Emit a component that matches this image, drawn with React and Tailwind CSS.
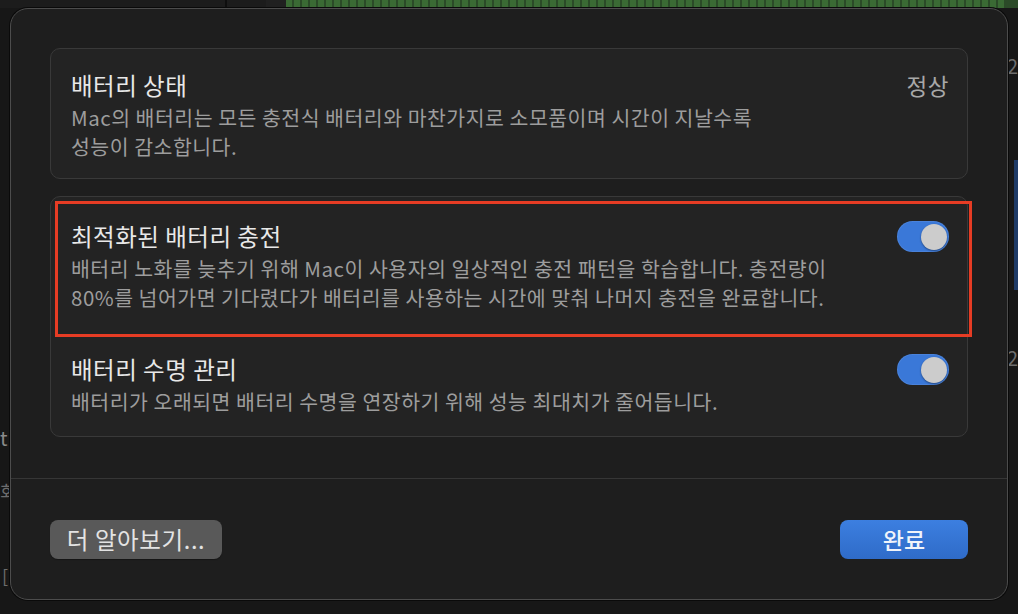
import React from 'react';

const font = { fontFamily: '"Noto Sans CJK KR", "Noto Sans", sans-serif' };

const Toggle = () => (
  <div className="w-[52px] h-[31px] rounded-full bg-[#3a78d8] flex items-center justify-end px-[2px] shrink-0 shadow-[inset_0_0_0_1px_rgba(255,255,255,0.08)]">
    <div className="w-[26px] h-[26px] rounded-full bg-[#cccccc] shadow-[0_1px_2px_rgba(0,0,0,0.4)]" />
  </div>
);

const Row = ({ title, desc, right, className = '' }) => (
  <div className={`flex items-start justify-between pl-5 pr-[18px] ${className}`}>
    <div className="flex flex-col">
      <div className="text-[23.5px] leading-[30px] tracking-[0.5px] text-[#e8e8e8]">{title}</div>
      <div className="text-[20.5px] leading-[29px] tracking-[0.5px] text-[#9d9d9d] mt-[3px]">{desc}</div>
    </div>
    {right}
  </div>
);

export default function App() {
  return (
    <div style={font} className="w-[1018px] h-[614px] bg-[#171717] relative overflow-hidden">
      {/* background strip behind the sheet */}
      <div className="absolute top-0 left-0 right-0 h-[8px] flex">
        <div className="w-[225px] bg-[#1c1c1c]" />
        <div className="w-[2px] bg-[#0e0e0e]" />
        <div className="w-[39px] bg-[#1c1c1c]" />
        <div className="w-[20px] bg-[#202020]" />
        <div className="flex-1 flex gap-[2px] bg-[#2b4a28]">
          {Array.from({ length: 90 }).map((_, i) => (
            <div key={i} className="w-[6px] bg-[#3a6a34]" />
          ))}
        </div>
      </div>
      <div className="absolute left-0 top-[428px] text-[20px] text-[#8a8a8a] leading-none">t</div>
      <div className="absolute left-0 top-[482px] text-[18px] text-[#6d6d6d] leading-none">회</div>
      <div className="absolute left-[2px] top-[566px] text-[18px] text-[#6d6d6d] leading-none">[</div>
      <div className="absolute right-0 top-[56px] text-[20px] text-[#6d6d6d] leading-none">2</div>
      <div className="absolute right-0 top-[348px] text-[20px] text-[#6d6d6d] leading-none">2</div>
      <div className="absolute right-0 top-[160px] w-[4px] h-[130px] bg-[#1e3a66]" />

      {/* sheet */}
      <div className="absolute left-[10px] top-[8px] w-[998px] h-[592px] rounded-[18px] bg-[#1e1e1e] border border-[#4c4c4c] flex flex-col shadow-[0_0_0_1px_#0a0a0a]">
        <div className="px-[39px] pt-[39px] flex flex-col gap-[17px]">
          <div className="rounded-[10px] border border-[#393939] bg-[#232323] pt-[21px] pb-[17px]">
            <Row
              title="배터리 상태"
              desc={<>Mac의 배터리는 모든 충전식 배터리와 마찬가지로 소모품이며 시간이 지날수록<br />성능이 감소합니다.</>}
              right={<div className="text-[22.5px] leading-[30px] tracking-[0.5px] text-[#a8a8a8]">정상</div>}
            />
          </div>

          <div className="relative rounded-[10px] border border-[#393939] bg-[#232323]">
            <Row
              className="pt-[24px] pb-[21px]"
              title="최적화된 배터리 충전"
              desc={<>배터리 노화를 늦추기 위해 Mac이 사용자의 일상적인 충전 패턴을 학습합니다. 충전량이<br />80%를 넘어가면 기다렸다가 배터리를 사용하는 시간에 맞춰 나머지 충전을 완료합니다.</>}
              right={<Toggle />}
            />
            <Row
              className="pt-[21px] pb-[20px]"
              title="배터리 수명 관리"
              desc="배터리가 오래되면 배터리 수명을 연장하기 위해 성능 최대치가 줄어듭니다."
              right={<Toggle />}
            />
            {/* red annotation box */}
            <div className="absolute left-[4px] top-[4px] w-[917px] h-[136px] border-[3px] border-[#e63c24] pointer-events-none" />
          </div>
        </div>

        <div className="mt-[41px] h-px bg-[#363636]" />

        <div className="flex items-center justify-between px-[39px] pt-[41px]">
          <button className="w-[172px] h-[39px] rounded-[8px] bg-[#595959] text-[23.5px] tracking-[0.6px] text-[#e3e3e3] shadow-[0_1px_1px_rgba(0,0,0,0.3)]">
            더 알아보기...
          </button>
          <button className="w-[128px] h-[39px] rounded-[8px] bg-gradient-to-b from-[#3c7fe0] to-[#2f6bc8] text-[23px] text-[#f0f4fa] font-medium">
            완료
          </button>
        </div>
      </div>
    </div>
  );
}
